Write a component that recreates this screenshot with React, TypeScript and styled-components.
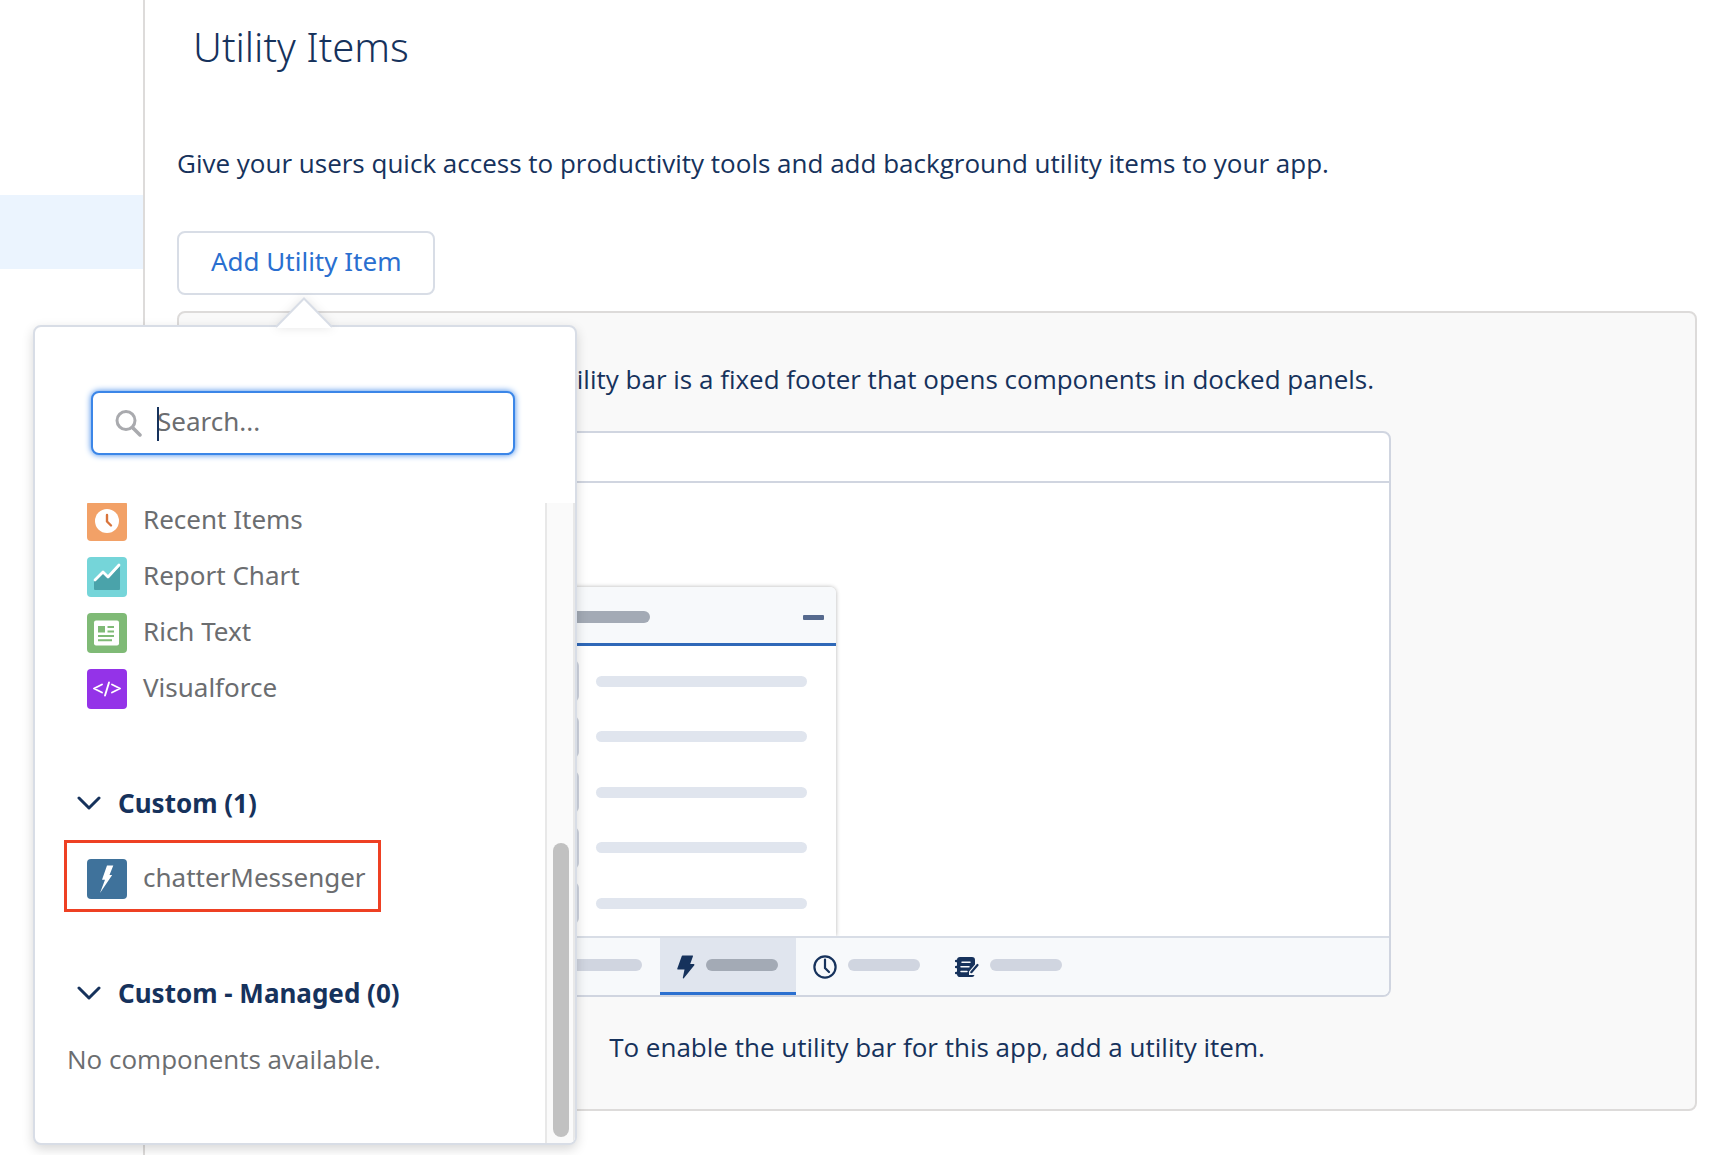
import React from "react";
import styled, { createGlobalStyle, css } from "styled-components";

const navy = "#16325c";
const mutedText = "#6b6d70";
const line = "#d8dde6";
const uiFont = `"Noto Sans", "Open Sans", sans-serif`;
const proseFont = `"Open Sans", "Noto Sans", sans-serif`;

const GlobalStyle = createGlobalStyle`
  *, *::before, *::after { box-sizing: border-box; }
  body { margin: 0; background: #fff; color: ${navy}; font: 400 26px/40px ${uiFont}; }
  h1, h2, p, ul { margin: 0; padding: 0; }
  ul { list-style: none; }
  button, input { font: inherit; color: inherit; margin: 0; }
`;

const Page = styled.div`
  display: flex;
  min-height: 100vh;
`;

const Sidebar = styled.nav`
  flex: 0 0 145px;
  padding-top: 195px;
  border-right: 2px solid #dddbda;
`;

const SelectedStep = styled.div`
  height: 74px;
  background: #ebf4fe;
`;

const Main = styled.main`
  flex: 1;
  min-width: 0;
  padding: 22px 21px 0 32px;
`;

const Title = styled.h1`
  padding-left: 16px;
  font-size: 40px;
  font-weight: 300;
  line-height: 50px;
`;

const Intro = styled.p`
  margin-top: 71px;
  font-family: ${proseFont};
`;

const Anchor = styled.div`
  position: relative;
  width: fit-content;
  margin-top: 48px;
`;

const AddButton = styled.button`
  display: block;
  height: 64px;
  padding: 0 32px 4px;
  border: 2px solid ${line};
  border-radius: 8px;
  background: #fff;
  color: #2a6fd0;
  cursor: pointer;
`;

/* Popover */

const Popover = styled.section`
  position: absolute;
  z-index: 2;
  top: calc(100% + 30px);
  left: -144px;
  display: flex;
  flex-direction: column;
  width: 544px;
  height: 820px;
  border: 2px solid ${line};
  border-radius: 8px;
  background: #fff;
  box-shadow: 0 4px 12px rgba(0, 0, 0, 0.16);
`;

const Nubbin = styled.svg`
  position: absolute;
  top: -30px;
  left: 240px;
  width: 58px;
  height: 31px;
  filter: drop-shadow(0 0 5px rgba(0, 0, 0, 0.1));
`;

const SearchField = styled.label`
  position: relative;
  display: block;
  margin: 64px 60px 48px 56px;
`;

const SearchInput = styled.input`
  display: block;
  width: 100%;
  height: 64px;
  padding: 0 16px 4px 64px;
  border: 2px solid #3b86e8;
  border-radius: 8px;
  outline: 0;
  background: #fff;
  box-shadow: 0 0 6px #3b86e8;
  caret-color: transparent;
  &::placeholder {
    color: ${mutedText};
    opacity: 1;
  }
`;

const SearchIcon = styled.svg`
  position: absolute;
  top: 18px;
  left: 24px;
  width: 27px;
  height: 28px;
`;

const Caret = styled.span`
  position: absolute;
  top: 16px;
  left: 66px;
  width: 2px;
  height: 34px;
  background: ${navy};
`;

const Scroller = styled.div`
  display: flex;
  flex: 1;
  min-height: 0;
  border-radius: 0 0 6px 6px;
  overflow: hidden;
`;

const ListPane = styled.div`
  flex: 1;
  margin-top: -2px;
`;

const ScrollTrack = styled.div`
  display: flex;
  flex: 0 0 30px;
  flex-direction: column;
  justify-content: flex-end;
  padding: 0 4px 6px 6px;
  border: solid #e8e8e8;
  border-width: 0 2px;
  background: #fafafa;
`;

const ScrollThumb = styled.div`
  height: 294px;
  border-radius: 8px;
  background: #c1c1c1;
`;

const ItemList = styled.ul`
  display: grid;
  gap: 16px;
  padding-left: 52px;
`;

const Item = styled.button<{ $marked?: boolean }>`
  position: relative;
  display: flex;
  gap: 16px;
  padding: 0;
  border: 0;
  background: none;
  color: ${mutedText};
  line-height: 36px;
  text-align: left;
  cursor: pointer;
  ${(p) =>
    p.$marked &&
    css`
      &::after {
        content: "";
        position: absolute;
        inset: -19px -15px -13px -23px;
        border: 3px solid #ee4023;
      }
    `}
`;

const TileIcon = styled.svg`
  width: 40px;
  height: 40px;
  border-radius: 4px;
`;

const SectionToggle = styled.button`
  display: flex;
  align-items: center;
  gap: 17px;
  margin: 74px 0 0 42px;
  padding: 0;
  border: 0;
  background: none;
  font-weight: 700;
  cursor: pointer;
`;

const SectionBody = styled.div`
  padding-top: 36px;
`;

const EmptyNote = styled.p`
  padding: 26px 0 0 32px;
  color: ${mutedText};
  font-family: ${proseFont};
`;

/* Preview */

const Panel = styled.section`
  display: flex;
  flex-direction: column;
  align-items: center;
  margin-top: 16px;
  padding: 46px 0 42px;
  border: 2px solid #dddbda;
  border-radius: 8px;
  background: #f9f9f9;
  font-family: ${proseFont};
`;

const Preview = styled.div`
  width: 100%;
  max-width: 908px;
  margin: 32px 0 30px;
  border: 2px solid #d0d5e0;
  border-radius: 8px;
  background: #fff;
  overflow: hidden;
`;

const PreviewHeader = styled.div`
  height: 50px;
  border-bottom: 2px solid #d0d5e0;
`;

const PreviewBody = styled.div`
  padding: 104px 0 0 33px;
`;

const Docked = styled.div`
  width: 318px;
  border-radius: 6px 6px 0 0;
  background: #fff;
  box-shadow: 0 0 4px rgba(0, 0, 0, 0.3);
`;

const DockedHeader = styled.div`
  display: flex;
  align-items: center;
  justify-content: space-between;
  height: 59px;
  padding: 4px 12px 0 19px;
  border-bottom: 3px solid #2f68b8;
  border-radius: 6px 6px 0 0;
  background: #f7f9fb;
`;

const Minimize = styled.div`
  width: 21px;
  height: 5px;
  border-radius: 1px;
  background: #566a8e;
`;

const DockedRows = styled.div`
  display: flex;
  flex-direction: column;
  justify-content: space-between;
  height: 290px;
  padding: 14px 29px 12px 19px;
`;

const DockedRow = styled.div`
  display: flex;
  align-items: center;
  gap: 17px;
`;

const Avatar = styled.div`
  width: 42px;
  height: 42px;
  border-radius: 6px;
  background: #d0d5e0;
`;

const barTones = { light: "#e0e5ee", mid: "#d0d5e0", dark: "#a3aab5" };

const Bar = styled.div<{ $tone: keyof typeof barTones; $width?: number }>`
  flex: ${(p) => (p.$width ? `0 0 ${p.$width}px` : 1)};
  height: ${(p) => (p.$tone === "light" ? 11 : 12)}px;
  border-radius: 6px;
  background: ${(p) => barTones[p.$tone]};
`;

const UtilityBar = styled.div`
  display: flex;
  height: 59px;
  padding-left: 33px;
  border-top: 2px solid ${line};
  background: #f7f9fb;
`;

const UtilityTab = styled.div<{ $active?: boolean }>`
  display: flex;
  align-items: center;
  gap: 11px;
  padding: 3px 18px ${(p) => (p.$active ? 0 : 3)}px 17px;
  ${(p) =>
    p.$active &&
    css`
      border-bottom: 3px solid #2b70d0;
      background: #e0e5ee;
    `}
  > div {
    margin-bottom: 3px;
  }
`;

const SearchGlyph = () => (
  <SearchIcon viewBox="0 0 27 28" fill="none" stroke="#a9aaae" aria-hidden="true">
    <circle cx="11" cy="11.500" r="9" strokeWidth="3" />
    <path d="M18 19l7 7" strokeWidth="3.500" strokeLinecap="round" />
  </SearchIcon>
);

const Chevron = () => (
  <svg width="24" height="16" viewBox="0 0 24 16" fill="none" stroke={navy} strokeWidth="3" strokeLinecap="round" strokeLinejoin="round" aria-hidden="true">
    <path d="M2 3l10 10L22 3" />
  </svg>
);

const RecentIcon = () => (
  <TileIcon viewBox="0 0 40 40" aria-hidden="true">
    <rect width="40" height="40" fill="#f2a167" />
    <circle cx="20" cy="20" r="12" fill="#fff" />
    <path d="M20 14v6.500l4 4" fill="none" stroke="#d9743c" strokeWidth="2.400" strokeLinecap="round" strokeLinejoin="round" />
  </TileIcon>
);

const ReportIcon = () => (
  <TileIcon viewBox="0 0 40 40" aria-hidden="true">
    <rect width="40" height="40" fill="#75d5d9" />
    <path d="M7 24l9-8 5 5L33 9v23a1 1 0 0 1-1 1H8a1 1 0 0 1-1-1z" fill="#4aa3aa" />
    <path d="M8 23l8-8 5 5L32 8" fill="none" stroke="#fff" strokeWidth="2.800" strokeLinecap="round" strokeLinejoin="round" />
  </TileIcon>
);

const RichTextIcon = () => (
  <TileIcon viewBox="0 0 40 40" aria-hidden="true">
    <rect width="40" height="40" fill="#7fba76" />
    <rect x="7" y="7.500" width="25" height="25" rx="2" fill="#fff" />
    <path d="M11 13h7v6.500h-7zM20.500 13H27v2h-6.500zM20.500 17.500H27v2h-6.500zM11 22h16v2H11zM11 26.200h14v2H11z" fill="#7fba76" />
  </TileIcon>
);

const CodeIcon = () => (
  <TileIcon viewBox="0 0 40 40" aria-hidden="true">
    <rect width="40" height="40" fill="#9433e8" />
    <path d="M15 15.500l-8 4 8 4M25 15.500l8 4-8 4M22 13.500l-4 13" fill="none" stroke="#fff" strokeWidth="1.900" strokeLinecap="round" strokeLinejoin="round" />
  </TileIcon>
);

const LightningIcon = () => (
  <TileIcon viewBox="0 0 40 40" aria-hidden="true">
    <rect width="40" height="40" fill="#3f729b" />
    <path d="M20 6.500H26.300L22.500 16h2.700L13 34l5-13.200h-3z" fill="#fff" />
  </TileIcon>
);

const BoltGlyph = () => (
  <svg width="18" height="24" viewBox="0 0 18 24" fill={navy} aria-hidden="true">
    <path d="M5.500 0.500H15.300c.6 0 .9.600.6 1.100L13.200 9h3.500c.7 0 1 .8.600 1.300L6.800 23.200c-.4.400-1.100.1-1-.4L7.500 14.500H1c-.6 0-.9-.5-.7-1L4.800 1c.1-.3.400-.5.700-.5z" />
  </svg>
);

const ClockGlyph = () => (
  <svg width="24" height="24" viewBox="0 0 24 24" fill="none" stroke={navy} strokeWidth="2.200" aria-hidden="true">
    <circle cx="12" cy="12" r="10.600" />
    <path d="M12 4.500V13l4 4" strokeLinecap="round" />
  </svg>
);

const NotebookGlyph = () => (
  <svg width="24" height="24" viewBox="0 0 24 24" aria-hidden="true">
    <path d="M5 2h12a3 3 0 0 1 3 3v4.500l-6 7V20h4.500l1 .2A2.500 2.500 0 0 1 17 22H5a3 3 0 0 1-3-2.800H1a1 1 0 0 1 0-2.400h1v-3.600H1a1 1 0 0 1 0-2.400h1V7.200H1a1 1 0 0 1 0-2.400h1A3 3 0 0 1 5 2z" fill={navy} />
    <path d="M7 7.200h8M6 11.800h8M6 16.400h6" stroke="#f7f9fb" strokeWidth="1.500" strokeLinecap="round" />
    <path d="M22.500 10l-6.200 7.200" stroke={navy} strokeWidth="2.200" strokeLinecap="round" />
  </svg>
);

const ListGlyph = () => (
  <svg width="24" height="24" viewBox="0 0 24 24" stroke={navy} strokeWidth="3" aria-hidden="true">
    <path d="M2 5h20M2 12h20M2 19h20" />
  </svg>
);

const standardItems = [
  { name: "Recent Items", Icon: RecentIcon },
  { name: "Report Chart", Icon: ReportIcon },
  { name: "Rich Text", Icon: RichTextIcon },
  { name: "Visualforce", Icon: CodeIcon },
];

const AddItemPopover = () => (
  <Popover aria-label="Utility item picker">
    <Nubbin viewBox="0 0 58 31" aria-hidden="true">
      <path d="M1 31L29 2l28 29z" fill="#fff" />
      <path d="M1 30L29 1.500 57 30" fill="none" stroke={line} strokeWidth="2" />
    </Nubbin>
    <SearchField>
      <SearchInput type="search" placeholder="Search..." aria-label="Search" />
      <SearchGlyph />
      <Caret />
    </SearchField>
    <Scroller>
      <ListPane>
        <ItemList>
          {standardItems.map(({ name, Icon }) => (
            <li key={name}>
              <Item type="button">
                <Icon />
                {name}
              </Item>
            </li>
          ))}
        </ItemList>
        <SectionToggle type="button" aria-expanded="true">
          <Chevron />
          Custom (1)
        </SectionToggle>
        <SectionBody>
          <ItemList>
            <li>
              <Item type="button" $marked>
                <LightningIcon />
                chatterMessenger
              </Item>
            </li>
          </ItemList>
        </SectionBody>
        <SectionToggle type="button" aria-expanded="true">
          <Chevron />
          Custom - Managed (0)
        </SectionToggle>
        <EmptyNote>No components available.</EmptyNote>
      </ListPane>
      <ScrollTrack>
        <ScrollThumb />
      </ScrollTrack>
    </Scroller>
  </Popover>
);

const UtilityPreview = () => (
  <Preview>
    <PreviewHeader />
    <PreviewBody>
      <Docked>
        <DockedHeader>
          <Bar $tone="dark" $width={113} />
          <Minimize />
        </DockedHeader>
        <DockedRows>
          {[0, 1, 2, 3, 4].map((row) => (
            <DockedRow key={row}>
              <Avatar />
              <Bar $tone="light" />
            </DockedRow>
          ))}
        </DockedRows>
      </Docked>
    </PreviewBody>
    <UtilityBar>
      <UtilityTab>
        <ListGlyph />
        <Bar $tone="mid" $width={72} />
      </UtilityTab>
      <UtilityTab $active>
        <BoltGlyph />
        <Bar $tone="dark" $width={72} />
      </UtilityTab>
      <UtilityTab>
        <ClockGlyph />
        <Bar $tone="mid" $width={72} />
      </UtilityTab>
      <UtilityTab>
        <NotebookGlyph />
        <Bar $tone="mid" $width={72} />
      </UtilityTab>
    </UtilityBar>
  </Preview>
);

export default function App() {
  return (
    <>
      <GlobalStyle />
      <Page>
        <Sidebar>
          <SelectedStep />
        </Sidebar>
        <Main>
          <Title>Utility Items</Title>
          <Intro>Give your users quick access to productivity tools and add background utility items to your app.</Intro>
          <Anchor>
            <AddButton type="button">Add Utility Item</AddButton>
            <AddItemPopover />
          </Anchor>
          <Panel>
            <p>The utility bar is a fixed footer that opens components in docked panels.</p>
            <UtilityPreview />
            <p>To enable the utility bar for this app, add a utility item.</p>
          </Panel>
        </Main>
      </Page>
    </>
  );
}
